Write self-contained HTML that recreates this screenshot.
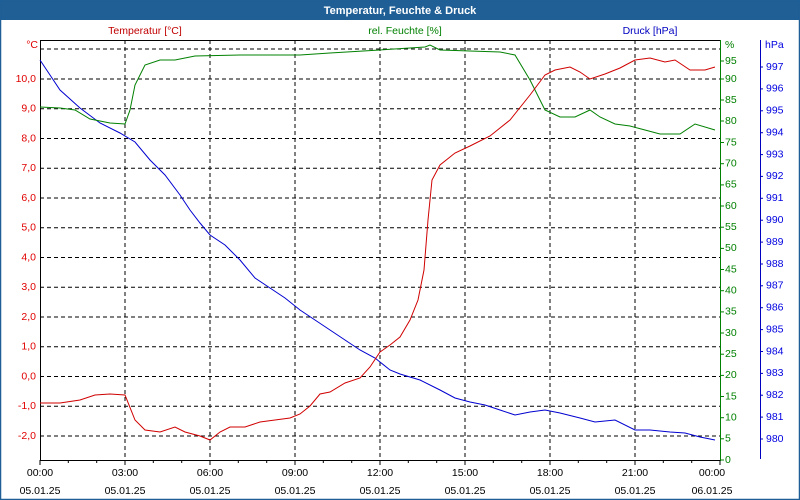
<!DOCTYPE html>
<html><head><meta charset="utf-8"><style>
html,body{margin:0;padding:0;background:#fff}
svg{display:block;font-family:"Liberation Sans",sans-serif;font-size:10.5px}
</style></head><body>
<svg width="800" height="500" viewBox="0 0 800 500" xmlns="http://www.w3.org/2000/svg">
<rect x="0" y="0" width="800" height="500" fill="#fff"/>
<rect x="0" y="0" width="800" height="20" fill="#1f5f96"/>
<rect x="0.5" y="0.5" width="799" height="499" fill="none" stroke="#1f5f96" stroke-width="1.5"/>
<text x="400" y="14" text-anchor="middle" fill="#fff" font-weight="bold" font-size="11">Temperatur, Feuchte &amp; Druck</text>
<text x="145" y="34" text-anchor="middle" fill="#c00000">Temperatur [°C]</text>
<text x="405" y="34" text-anchor="middle" fill="#008000">rel. Feuchte [%]</text>
<text x="650" y="34" text-anchor="middle" fill="#0000c0">Druck [hPa]</text>
<g stroke="#000" stroke-dasharray="4,3" stroke-width="1">
<line x1="40" y1="49" x2="720" y2="49"/><line x1="40" y1="79" x2="720" y2="79"/><line x1="40" y1="108.75" x2="720" y2="108.75"/><line x1="40" y1="138.5" x2="720" y2="138.5"/><line x1="40" y1="168.25" x2="720" y2="168.25"/><line x1="40" y1="198" x2="720" y2="198"/><line x1="40" y1="227.75" x2="720" y2="227.75"/><line x1="40" y1="257.5" x2="720" y2="257.5"/><line x1="40" y1="287.25" x2="720" y2="287.25"/><line x1="40" y1="317" x2="720" y2="317"/><line x1="40" y1="346.75" x2="720" y2="346.75"/><line x1="40" y1="376.5" x2="720" y2="376.5"/><line x1="40" y1="406.25" x2="720" y2="406.25"/><line x1="40" y1="436" x2="720" y2="436"/>
<line x1="125" y1="40" x2="125" y2="460"/><line x1="210" y1="40" x2="210" y2="460"/><line x1="295" y1="40" x2="295" y2="460"/><line x1="380" y1="40" x2="380" y2="460"/><line x1="465" y1="40" x2="465" y2="460"/><line x1="550" y1="40" x2="550" y2="460"/><line x1="635" y1="40" x2="635" y2="460"/>
</g>
<line x1="40" y1="40.5" x2="720" y2="40.5" stroke="#000"/>
<line x1="40.5" y1="40" x2="40.5" y2="461" stroke="#000"/>
<line x1="40" y1="460.5" x2="720" y2="460.5" stroke="#000"/>
<line x1="720.5" y1="40" x2="720.5" y2="461" stroke="#008000"/>
<line x1="760.5" y1="40" x2="760.5" y2="459" stroke="#0000c0"/>
<g stroke="#000">
<line x1="40" y1="460" x2="40" y2="465"/><line x1="68.3" y1="460" x2="68.3" y2="463"/><line x1="96.7" y1="460" x2="96.7" y2="463"/><line x1="125" y1="460" x2="125" y2="465"/><line x1="153.3" y1="460" x2="153.3" y2="463"/><line x1="181.7" y1="460" x2="181.7" y2="463"/><line x1="210" y1="460" x2="210" y2="465"/><line x1="238.3" y1="460" x2="238.3" y2="463"/><line x1="266.7" y1="460" x2="266.7" y2="463"/><line x1="295" y1="460" x2="295" y2="465"/><line x1="323.3" y1="460" x2="323.3" y2="463"/><line x1="351.7" y1="460" x2="351.7" y2="463"/><line x1="380" y1="460" x2="380" y2="465"/><line x1="408.3" y1="460" x2="408.3" y2="463"/><line x1="436.7" y1="460" x2="436.7" y2="463"/><line x1="465" y1="460" x2="465" y2="465"/><line x1="493.3" y1="460" x2="493.3" y2="463"/><line x1="521.7" y1="460" x2="521.7" y2="463"/><line x1="550" y1="460" x2="550" y2="465"/><line x1="578.3" y1="460" x2="578.3" y2="463"/><line x1="606.7" y1="460" x2="606.7" y2="463"/><line x1="635" y1="460" x2="635" y2="465"/><line x1="663.3" y1="460" x2="663.3" y2="463"/><line x1="691.7" y1="460" x2="691.7" y2="463"/><line x1="720" y1="460" x2="720" y2="465"/>
</g>
<g fill="#000" text-anchor="middle">
<text x="40" y="476">00:00</text><text x="40" y="494">05.01.25</text>
<text x="125" y="476">03:00</text><text x="125" y="494">05.01.25</text>
<text x="210" y="476">06:00</text><text x="210" y="494">05.01.25</text>
<text x="295" y="476">09:00</text><text x="295" y="494">05.01.25</text>
<text x="380" y="476">12:00</text><text x="380" y="494">05.01.25</text>
<text x="465" y="476">15:00</text><text x="465" y="494">05.01.25</text>
<text x="550" y="476">18:00</text><text x="550" y="494">05.01.25</text>
<text x="635" y="476">21:00</text><text x="635" y="494">05.01.25</text>
<text x="712" y="476">00:00</text><text x="712" y="494">06.01.25</text>
</g>
<g fill="#e00000" text-anchor="end" dominant-baseline="middle">
<text x="38" y="45">°C</text>
<text x="36" y="79">10,0</text><text x="36" y="108.75">9,0</text><text x="36" y="138.5">8,0</text><text x="36" y="168.25">7,0</text><text x="36" y="198">6,0</text><text x="36" y="227.75">5,0</text><text x="36" y="257.5">4,0</text><text x="36" y="287.25">3,0</text><text x="36" y="317">2,0</text><text x="36" y="346.75">1,0</text><text x="36" y="376.5">0,0</text><text x="36" y="406.25">-1,0</text><text x="36" y="436">-2,0</text>
</g>
<g fill="#008000" dominant-baseline="middle">
<text x="725" y="45">%</text>
<text x="725" y="61">95</text><text x="725" y="79">90</text><text x="725" y="100">85</text><text x="725" y="121">80</text><text x="725" y="142.5">75</text><text x="725" y="163.7">70</text><text x="725" y="184.9">65</text><text x="725" y="206">60</text><text x="725" y="227.2">55</text><text x="725" y="248.4">50</text><text x="725" y="269.5">45</text><text x="725" y="290.7">40</text><text x="725" y="311.9">35</text><text x="725" y="333">30</text><text x="725" y="354.2">25</text><text x="725" y="375.4">20</text><text x="725" y="396.5">15</text><text x="725" y="417.7">10</text><text x="725" y="438.8">5</text><text x="725" y="460">0</text>
</g>
<g stroke="#008000"><line x1="720" y1="61" x2="724" y2="61"/><line x1="720" y1="79" x2="724" y2="79"/><line x1="720" y1="100" x2="724" y2="100"/><line x1="720" y1="121" x2="724" y2="121"/><line x1="720" y1="142.5" x2="724" y2="142.5"/><line x1="720" y1="163.7" x2="724" y2="163.7"/><line x1="720" y1="184.9" x2="724" y2="184.9"/><line x1="720" y1="206" x2="724" y2="206"/><line x1="720" y1="227.2" x2="724" y2="227.2"/><line x1="720" y1="248.4" x2="724" y2="248.4"/><line x1="720" y1="269.5" x2="724" y2="269.5"/><line x1="720" y1="290.7" x2="724" y2="290.7"/><line x1="720" y1="311.9" x2="724" y2="311.9"/><line x1="720" y1="333" x2="724" y2="333"/><line x1="720" y1="354.2" x2="724" y2="354.2"/><line x1="720" y1="375.4" x2="724" y2="375.4"/><line x1="720" y1="396.5" x2="724" y2="396.5"/><line x1="720" y1="417.7" x2="724" y2="417.7"/><line x1="720" y1="438.8" x2="724" y2="438.8"/><line x1="720" y1="460" x2="724" y2="460"/></g>
<g fill="#0000e0" dominant-baseline="middle">
<text x="765" y="45">hPa</text>
<text x="766" y="67">997</text><text x="766" y="88.9">996</text><text x="766" y="110.8">995</text><text x="766" y="132.7">994</text><text x="766" y="154.6">993</text><text x="766" y="176.4">992</text><text x="766" y="198.3">991</text><text x="766" y="220.2">990</text><text x="766" y="242.1">989</text><text x="766" y="264">988</text><text x="766" y="285.8">987</text><text x="766" y="307.7">986</text><text x="766" y="329.6">985</text><text x="766" y="351.5">984</text><text x="766" y="373.4">983</text><text x="766" y="395.2">982</text><text x="766" y="417.1">981</text><text x="766" y="439">980</text>
</g>
<g stroke="#0000c0"><line x1="760" y1="67" x2="763" y2="67"/><line x1="760" y1="88.9" x2="763" y2="88.9"/><line x1="760" y1="110.8" x2="763" y2="110.8"/><line x1="760" y1="132.7" x2="763" y2="132.7"/><line x1="760" y1="154.6" x2="763" y2="154.6"/><line x1="760" y1="176.4" x2="763" y2="176.4"/><line x1="760" y1="198.3" x2="763" y2="198.3"/><line x1="760" y1="220.2" x2="763" y2="220.2"/><line x1="760" y1="242.1" x2="763" y2="242.1"/><line x1="760" y1="264" x2="763" y2="264"/><line x1="760" y1="285.8" x2="763" y2="285.8"/><line x1="760" y1="307.7" x2="763" y2="307.7"/><line x1="760" y1="329.6" x2="763" y2="329.6"/><line x1="760" y1="351.5" x2="763" y2="351.5"/><line x1="760" y1="373.4" x2="763" y2="373.4"/><line x1="760" y1="395.2" x2="763" y2="395.2"/><line x1="760" y1="417.1" x2="763" y2="417.1"/><line x1="760" y1="439" x2="763" y2="439"/></g>
<polyline fill="none" stroke="#0000d0" stroke-width="1" points="40,60 50,75 60,90 80,108 100,123 120,133 135,142 150,160 165,175 180,195 190,210 200,223 210,235 225,245 240,260 255,278 270,288 285,298 300,310 315,320 330,330 345,340 360,350 375,358 390,370 400,374 420,380 440,390 455,398 470,402 485,405 500,410 515,415 530,412 545,410 560,413 580,418 595,422 615,420 635,430 650,430 670,432 685,433 700,437 715,440"/>
<polyline fill="none" stroke="#008000" stroke-width="1" points="40,107 60,108 75,110 90,119 110,123 125,124 130,110 135,85 145,65 160,60 175,60 195,56 240,55 300,55 330,53 380,50 425,47 430,45 440,50 500,52 515,55 530,80 545,110 560,117 575,117 590,110 600,117 615,124 630,126 645,130 660,134 680,134 695,124 715,130"/>
<polyline fill="none" stroke="#d00000" stroke-width="1" points="40,403 60,403 80,400 95,395 110,394 125,395 135,420 145,430 160,432 175,427 185,432 200,436 210,440 220,432 230,427 245,427 260,422 275,420 290,418 300,414 310,406 320,394 330,392 345,383 360,378 370,367 380,352 390,345 400,337 410,320 418,300 424,270 428,220 432,180 440,165 455,153 470,146 490,136 510,120 530,95 545,75 555,70 570,67 580,72 590,79 605,74 620,68 635,60 650,58 665,62 675,60 690,70 705,70 715,67"/>
</svg>
</body></html>
